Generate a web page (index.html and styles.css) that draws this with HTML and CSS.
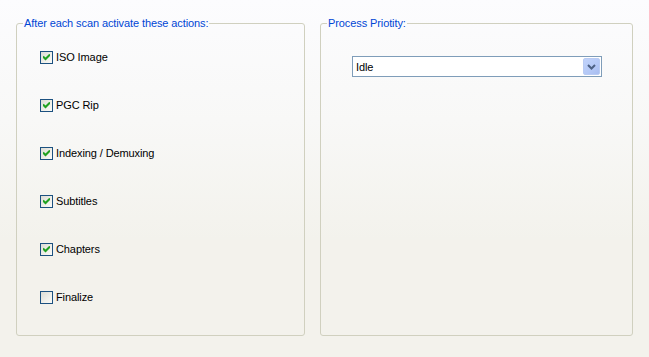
FILE: index.html
```html
<!DOCTYPE html>
<html>
<head>
<meta charset="utf-8">
<link rel="stylesheet" href="styles.css">
</head>
<body>
<div class="page">
  <fieldset class="group group-left">
    <legend>After each scan activate these actions:</legend>
    <div class="checks">
      <label class="check"><span class="box on"><svg viewBox="0 0 7 7" width="7" height="7"><path d="M0 2.5 L2.5 5 L7 0.5" fill="none" stroke="#21a121" stroke-width="2"/></svg></span>ISO Image</label>
      <label class="check"><span class="box on"><svg viewBox="0 0 7 7" width="7" height="7"><path d="M0 2.5 L2.5 5 L7 0.5" fill="none" stroke="#21a121" stroke-width="2"/></svg></span>PGC Rip</label>
      <label class="check"><span class="box on"><svg viewBox="0 0 7 7" width="7" height="7"><path d="M0 2.5 L2.5 5 L7 0.5" fill="none" stroke="#21a121" stroke-width="2"/></svg></span>Indexing / Demuxing</label>
      <label class="check"><span class="box on"><svg viewBox="0 0 7 7" width="7" height="7"><path d="M0 2.5 L2.5 5 L7 0.5" fill="none" stroke="#21a121" stroke-width="2"/></svg></span>Subtitles</label>
      <label class="check"><span class="box on"><svg viewBox="0 0 7 7" width="7" height="7"><path d="M0 2.5 L2.5 5 L7 0.5" fill="none" stroke="#21a121" stroke-width="2"/></svg></span>Chapters</label>
      <label class="check"><span class="box"></span>Finalize</label>
    </div>
  </fieldset>
  <fieldset class="group group-right">
    <legend>Process Priotity:</legend>
    <div class="combo">
      <span class="combo-text">Idle</span>
      <span class="combo-btn"><svg viewBox="0 0 9 6" width="9" height="6"><path d="M1 1 L4.5 4.5 L8 1" fill="none" stroke="#4d6185" stroke-width="2"/></svg></span>
    </div>
  </fieldset>
</div>
</body>
</html>
```
FILE: styles.css
```css
html, body {
  margin: 0;
  padding: 0;
}
body {
  width: 649px;
  height: 357px;
  overflow: hidden;
  background: linear-gradient(to bottom, #fcfcfe 0px, #f8f8f7 120px, #f3f2ec 240px, #f3f2ec 357px);
  font-family: "Liberation Sans", Arial, sans-serif;
  font-size: 11px;
  letter-spacing: -0.1px;
  color: #000;
}
.page {
  display: flex;
  gap: 15px;
  padding: 17px 0 0 16px;
}
.group {
  margin: 0;
  padding: 0;
  min-width: 0;
  border: 1px solid #d0d0bf;
  border-radius: 3px;
  height: 319px;
  box-sizing: border-box;
}
.group-left { width: 289px; }
.group-right { width: 313px; }
.group legend {
  margin-left: 6px;
  padding: 0 1px;
  line-height: 13px;
  color: #0046d5;
}
.checks {
  display: flex;
  flex-direction: column;
  gap: 35px;
  padding: 21px 0 0 23px;
}
.check {
  display: flex;
  align-items: center;
  gap: 3px;
  height: 13px;
  line-height: 13px;
}
.box {
  width: 13px;
  height: 13px;
  box-sizing: border-box;
  border: 1px solid #1c5180;
  background: linear-gradient(135deg, #dcdcd5 0%, #f0f0ea 60%, #fbfbf9 100%);
  display: flex;
  align-items: center;
  justify-content: center;
}
.combo {
  margin: 26px 0 0 31px;
  width: 250px;
  height: 21px;
  box-sizing: border-box;
  border: 1px solid #7f9db9;
  background: #fff;
  display: flex;
  align-items: center;
  justify-content: space-between;
  padding: 1px;
}
.combo-text {
  padding-left: 2px;
}
.combo-btn {
  width: 17px;
  height: 17px;
  box-sizing: border-box;
  border-radius: 2px;
  background: linear-gradient(135deg, #c1d3fb 0%, #b4c8f6 60%, #a8bdf0 100%);
  border: 1px solid #b9cbf3;
  display: flex;
  align-items: center;
  justify-content: center;
}
```
